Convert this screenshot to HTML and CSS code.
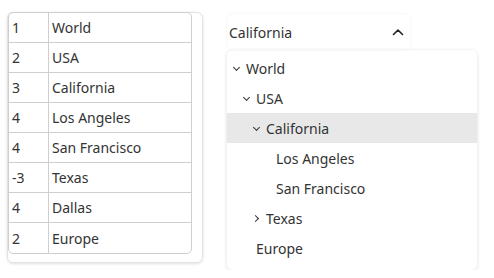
FILE: index.html
```html
<!DOCTYPE html>
<html lang="en">
<head>
    <meta charset="UTF-8">
    <title>Tree select</title>
    <link rel="stylesheet" href="styles.css">
</head>
<body>
    <div class="page">
        <div class="table-card">
            <table class="grid">
                <tr><td class="num">1</td><td>World</td></tr>
                <tr><td class="num">2</td><td>USA</td></tr>
                <tr><td class="num">3</td><td>California</td></tr>
                <tr><td class="num">4</td><td>Los Angeles</td></tr>
                <tr><td class="num">4</td><td>San Francisco</td></tr>
                <tr><td class="num">-3</td><td>Texas</td></tr>
                <tr><td class="num">4</td><td>Dallas</td></tr>
                <tr><td class="num">2</td><td>Europe</td></tr>
            </table>
        </div>

        <div class="picker">
            <div class="select">
                <span>California</span>
                <svg class="caret" width="12" height="8" viewBox="0 0 12 8">
                    <path d="M1.5 6.5L6 2L10.5 6.5" fill="none" stroke="#222" stroke-width="1.6" stroke-linecap="round" stroke-linejoin="round" />
                </svg>
            </div>
            <ul class="tree">
                <li class="lvl0"><span class="tog open"></span>World</li>
                <li class="lvl1"><span class="tog open"></span>USA</li>
                <li class="lvl2 active"><span class="tog open"></span>California</li>
                <li class="lvl3"><span class="tog"></span>Los Angeles</li>
                <li class="lvl3"><span class="tog"></span>San Francisco</li>
                <li class="lvl2"><span class="tog closed"></span>Texas</li>
                <li class="lvl1"><span class="tog"></span>Europe</li>
            </ul>
        </div>
    </div>
</body>
</html>
```

FILE: styles.css
```css
* {
    box-sizing: border-box;
}

body {
    margin: 0;
    font-family: "Noto Sans", "Open Sans", sans-serif;
    font-size: 14px;
    color: #333;
    background: white;
}

.page {
    display: flex;
    align-items: flex-start;
    padding: 12px 0 0 7px;
    gap: 24px;
}

.table-card {
    width: 196px;
    height: 251px;
    border: 1px solid #e2e2e2;
    border-radius: 6px;
    box-shadow: 0 1px 3px rgba(0, 0, 0, 0.12);
    padding: 0 10px 0 0;
}

.grid {
    width: 184px;
    margin-top: -1px;
    border: 1px solid #cfcfcf;
    border-radius: 5px;
    border-spacing: 0;
    border-collapse: separate;
}

.grid td {
    height: 30px;
    padding: 0 3px;
    border-bottom: 1px solid #cfcfcf;
    white-space: nowrap;
}

.grid tr:last-child td {
    border-bottom: none;
}

.grid td.num {
    width: 40px;
    border-right: 1px solid #cfcfcf;
}

.picker {
    margin-top: 2px;
    width: 250px;
}

.select {
    width: 183px;
    height: 36px;
    display: flex;
    align-items: center;
    justify-content: space-between;
    padding: 0 5px 0 2px;
    border-radius: 6px;
    box-shadow: 0 0 3px rgba(0, 0, 0, 0.07);
}

.caret {
    margin-right: 1px;
}

.tree {
    list-style: none;
    margin: 0;
    padding: 3px 0 7px;
    border-radius: 6px;
    box-shadow: 0 1px 4px rgba(0, 0, 0, 0.14);
}

.tree li {
    height: 30px;
    display: flex;
    align-items: center;
}

.tree li.active {
    background: #e8e8e8;
}

.lvl0 { padding-left: 5px; }
.lvl1 { padding-left: 15px; }
.lvl2 { padding-left: 25px; }
.lvl3 { padding-left: 35px; }

.tog {
    width: 14px;
    height: 14px;
    display: inline-block;
    position: relative;
}

.tog.open::before,
.tog.closed::before {
    content: "";
    position: absolute;
    width: 4px;
    height: 4px;
    border-right: 1px solid #333;
    border-bottom: 1px solid #333;
}

.tog.open::before {
    left: 2px;
    top: 4px;
    transform: rotate(45deg);
}

.tog.closed::before {
    left: 1px;
    top: 5px;
    transform: rotate(-45deg);
}
```
